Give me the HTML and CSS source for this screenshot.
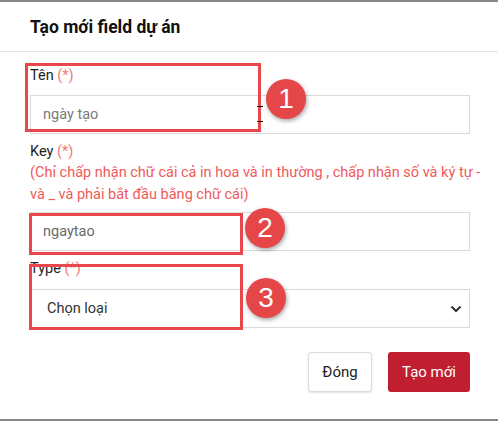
FILE: index.html
```html
<!DOCTYPE html>
<html lang="vi">
<head>
<meta charset="utf-8">
<link rel="stylesheet" href="styles.css">
</head>
<body>
<div class="modal">
  <div class="header"><h1 class="title">Tạo mới field dự án</h1></div>
  <div class="content">
    <div class="label">Tên <span class="req">(*)</span></div>
    <div class="field"><span class="ph">ngày tạo</span></div>
    <div class="label label-gap">Key <span class="req">(*)</span></div>
    <div class="help">(Chỉ chấp nhận chữ cái cả in hoa và in thường , chấp nhận số và ký tự - và _ và phải bắt đầu bằng chữ cái)</div>
    <div class="field field-key"><span class="val">ngaytao</span></div>
    <div class="label label-type">Type <span class="req">(*)</span></div>
    <div class="field select"><span class="sel">Chọn loại</span>
      <svg class="chev" width="12" height="8" viewBox="0 0 12 8"><path d="M1.5 1.5 L6 6 L10.5 1.5" fill="none" stroke="#343a40" stroke-width="2.2"/></svg>
    </div>
    <div class="footer">
      <button class="btn btn-close">Đóng</button>
      <button class="btn btn-primary">Tạo mới</button>
    </div>
  </div>

  <div class="mark mark1"></div>
  <div class="mark mark2"></div>
  <div class="mark mark3"></div>
  <div class="badge badge1">1</div>
  <div class="badge badge2">2</div>
  <div class="badge badge3">3</div>
  <div class="tick tick-a"></div>
  <div class="tick tick-b"></div>
</div>
</body>
</html>
```
FILE: styles.css
```css
html, body { margin: 0; padding: 0; background: #fff; }
body { font-family: Roboto, "Noto Sans", "Liberation Sans", sans-serif; color: #212121; }
.modal {
  position: relative;
  width: 498px;
  height: 421px;
  box-sizing: border-box;
  border-top: 2px solid #878787;
  border-bottom: 2px solid #878787;
}
.header {
  height: 50px;
  box-sizing: border-box;
  border-bottom: 1px solid #e3e3e3;
  display: flex;
  align-items: center;
  padding-left: 30px;
}
.title { margin: 0; font-size: 17.5px; font-weight: 700; color: #111; padding-top: 1px; }
.content { padding: 14px 28px 0 30px; }
.label { font-size: 14.5px; line-height: 20px; color: #1e1e1e; margin-bottom: 9px; }
.req { color: #f0797a; }
.label-gap { margin-top: 8px; margin-bottom: 0; }
.help { font-size: 14.5px; line-height: 22px; color: #ef5a5a; margin-bottom: 6px; margin-right: -24px; }
.label-type { margin-top: 8px; margin-bottom: 10px; }
.field {
  height: 39px;
  box-sizing: border-box;
  border: 1px solid #dadada;
  display: flex;
  align-items: center;
  padding-left: 12px;
  font-size: 14.5px;
}
.ph { color: #7a7a7a; }
.val { color: #6a6a6a; }
.select { justify-content: space-between; padding-left: 16px; padding-right: 7px; }
.sel { color: #333; }
.footer { display: flex; justify-content: flex-end; gap: 16px; margin-top: 24px; }
.btn {
  height: 40px;
  font-family: inherit;
  font-size: 15px;
  border-radius: 3px;
  cursor: pointer;
}
.btn-close { width: 64px; background: #fff; color: #222; border: 1px solid #dcdcdc; box-shadow: 0 1px 2px rgba(0,0,0,0.12); }
.btn-primary { width: 82px; background: #c01f31; color: #fff; border: none; }
.mark { position: absolute; border: 3px solid #e8474b; box-sizing: border-box; }
.mark1 { left: 25px; top: 61px; width: 236px; height: 69px; }
.mark2 { left: 29px; top: 211px; width: 214px; height: 42px; }
.mark3 { left: 29px; top: 262px; width: 214px; height: 66px; }
.badge {
  position: absolute;
  width: 40px; height: 40px;
  border-radius: 50%;
  background: #e54749;
  color: #fff;
  font-family: "Liberation Sans", Arial, sans-serif;
  font-size: 28px;
  line-height: 40px;
  text-align: center;
  box-shadow: 1px 2px 4px rgba(0,0,0,0.35);
}
.badge1 { left: 266px; top: 77px; }
.badge2 { left: 245px; top: 206px; }
.badge3 { left: 246px; top: 276px; }
.tick { position: absolute; width: 6px; height: 1px; background: #000; }
.tick-a { left: 257px; top: 104px; }
.tick-b { left: 257px; top: 119px; }
```
